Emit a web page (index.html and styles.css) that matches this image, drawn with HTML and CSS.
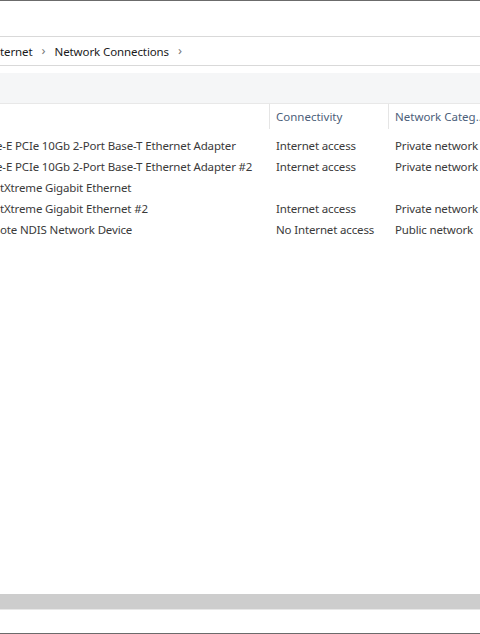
FILE: index.html
```html
<!DOCTYPE html>
<html lang="en">
<head>
  <meta charset="UTF-8" />
  <title>Network Connections</title>
  <link rel="stylesheet" href="styles.css">
</head>
<body>
  <div class="window">
    <div class="edge"></div>
    <div class="titlebar"></div>

    <div class="address">
      <span class="crumb">ternet</span>
      <span class="chev">&#8250;</span>
      <span class="crumb">Network Connections</span>
      <span class="chev">&#8250;</span>
    </div>

    <div class="toolbar"></div>

    <div class="list">
      <div class="row head">
        <div class="cell name"></div>
        <div class="cell sep">Connectivity</div>
        <div class="cell sep">Network Categ...</div>
      </div>

      <div class="rows">
        <div class="row">
          <div class="cell name"><span class="cut">e-E PCIe 10Gb 2-Port Base-T Ethernet Adapter</span></div>
          <div class="cell">Internet access</div>
          <div class="cell">Private network</div>
        </div>
        <div class="row">
          <div class="cell name"><span class="cut">e-E PCIe 10Gb 2-Port Base-T Ethernet Adapter #2</span></div>
          <div class="cell">Internet access</div>
          <div class="cell">Private network</div>
        </div>
        <div class="row">
          <div class="cell name">tXtreme Gigabit Ethernet</div>
          <div class="cell"></div>
          <div class="cell"></div>
        </div>
        <div class="row">
          <div class="cell name">tXtreme Gigabit Ethernet #2</div>
          <div class="cell">Internet access</div>
          <div class="cell">Private network</div>
        </div>
        <div class="row">
          <div class="cell name">ote NDIS Network Device</div>
          <div class="cell">No Internet access</div>
          <div class="cell">Public network</div>
        </div>
      </div>
    </div>

    <div class="hscroll"></div>
    <div class="status"></div>
    <div class="edge"></div>
  </div>
</body>
</html>
```

FILE: styles.css
```css
html, body {
  margin: 0;
  height: 100%;
  background: #fff;
}

body {
  font-family: "Noto Sans", "Segoe UI", sans-serif;
  font-size: 11.5px;
  color: #1e1e1e;
}

.window {
  display: flex;
  flex-direction: column;
  height: 100vh;
  overflow: hidden;
}

.edge {
  height: 1px;
  flex: none;
  background: #6b6b6b;
}

.titlebar {
  height: 35px;
  flex: none;
}

/* breadcrumb bar */
.address {
  height: 28px;
  flex: none;
  border-top: 1px solid #d9d9d9;
  border-bottom: 1px solid #d9d9d9;
  display: flex;
  align-items: center;
  gap: 9px;
  white-space: nowrap;
  color: #1a1a1a;
  letter-spacing: -0.1px;
}

.chev {
  color: #7a7a7a;
  font-size: 13px;
  width: 4px;
  margin-top: -2px;
}

.toolbar {
  height: 30px;
  flex: none;
  margin-top: 7px;
  background: #f5f6f7;
  border-bottom: 1px solid #e8e8e8;
}

/* details view */
.list {
  flex: 1;
}

.row {
  display: grid;
  grid-template-columns: 269px 119px 1fr;
  height: 21px;
  align-items: center;
  white-space: nowrap;
  color: #3a3a3a;
  letter-spacing: -0.15px;
}

.row.head {
  height: 25px;
  align-items: stretch;
  color: #4c607a;
  letter-spacing: 0;
}

.head .cell {
  display: flex;
  align-items: center;
  padding-bottom: 1px;
}

.cell {
  padding-left: 7px;
  overflow: hidden;
}

.cell.name {
  padding-left: 0;
}

.cell.sep {
  border-left: 1px solid #e5e5e5;
  padding-left: 6px;
}

.rows {
  padding-top: 6px;
}

.cut {
  margin-left: -4px;
}

.hscroll {
  height: 15px;
  flex: none;
  background: #cdcdcd;
  border-bottom: 1px solid #e8e8e8;
}

.status {
  height: 23px;
  flex: none;
}
```
